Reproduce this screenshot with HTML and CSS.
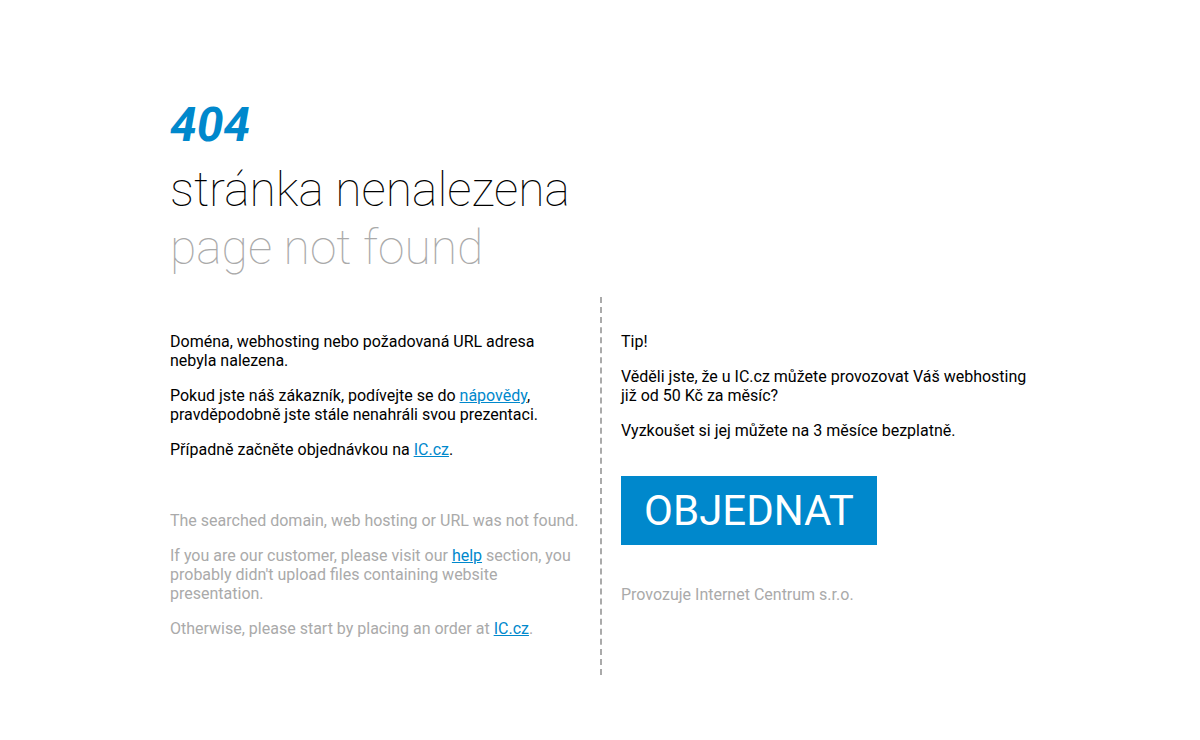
FILE: index.html
```html
<!DOCTYPE html>
<html lang="cs">
<head>
<meta charset="utf-8">
<title>404 - stránka nenalezena</title>
<link rel="stylesheet" href="styles.css">
</head>
<body>
<div class="wrap">
  <header class="head">
    <div class="code">404</div>
    <h1 class="title">stránka nenalezena</h1>
    <h2 class="subtitle">page not found</h2>
  </header>
  <div class="cols">
    <div class="col col-left">
      <div class="cz">
        <p>Doména, webhosting nebo požadovaná URL adresa nebyla nalezena.</p>
        <p>Pokud jste náš zákazník, podívejte se do <a href="#">nápovědy</a>, pravděpodobně jste stále nenahráli svou prezentaci.</p>
        <p>Případně začněte objednávkou na <a href="#">IC.cz</a>.</p>
      </div>
      <div class="en">
        <p>The searched domain, web hosting or URL was not found.</p>
        <p>If you are our customer, please visit our <a href="#">help</a> section, you probably didn't upload files containing website presentation.</p>
        <p>Otherwise, please start by placing an order at <a href="#">IC.cz</a>.</p>
      </div>
    </div>
    <div class="col col-right">
      <p>Tip!</p>
      <p>Věděli jste, že u IC.cz můžete provozovat Váš webhosting již od 50 Kč za měsíc?</p>
      <p>Vyzkoušet si jej můžete na 3 měsíce bezplatně.</p>
      <a class="btn" href="#">OBJEDNAT</a>
      <p class="owner">Provozuje Internet Centrum s.r.o.</p>
    </div>
  </div>
</div>
</body>
</html>
```
FILE: styles.css
```css
html, body {
  margin: 0;
  padding: 0;
  background: #fff;
}
body {
  font-family: Roboto, "Liberation Sans", sans-serif;
  font-size: 16px;
  color: #000;
}
.wrap {
  width: 860px;
  margin: 0 auto;
  padding-top: 97px;
}
.code {
  font-size: 48px;
  font-weight: 700;
  font-style: italic;
  color: #0088cc;
  line-height: 56px;
}
.title, .subtitle {
  margin: 0;
  font-size: 48px;
  font-weight: 100;
  line-height: 58px;
}
.title {
  color: #000;
  margin-top: 8px;
}
.subtitle {
  color: #aaa;
}
.cols {
  display: flex;
  margin-top: 20px;
}
.col {
  width: 430px;
  box-sizing: border-box;
  padding-top: 19px;
  padding-bottom: 21px;
}
.col-left {
  padding-right: 20px;
}
.col-right {
  border-left: 2px dashed #aaa;
  padding-left: 19px;
}
p {
  margin: 16px 0;
}
a {
  color: #0088cc;
  text-decoration: underline;
}
.en {
  margin-top: 52px;
  color: #aaa;
}
.btn {
  display: inline-block;
  margin-top: 20px;
  background: #0088cc;
  color: #fff;
  text-decoration: none;
  font-size: 42px;
  line-height: 69px;
  width: 256px;
  text-align: center;
}
.owner {
  margin-top: 40px;
  color: #aaa;
}
```
